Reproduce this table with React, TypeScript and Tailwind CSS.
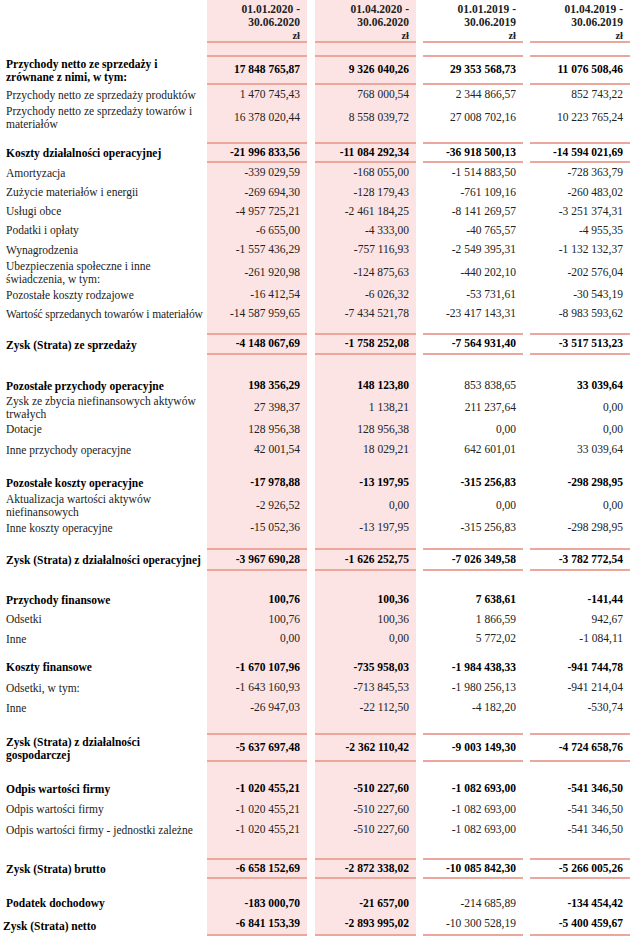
type Row = {
  label?: string[];
  values?: string[];
  bold?: boolean;
  h: string;
  line?: boolean;
  plain?: number[];
  header?: boolean;
  shift?: boolean;
  tight?: boolean;
};

const rows: Row[] = [
  { header: true, h: 'h-[43px]', line: true },
  { h: 'h-[14px]', line: true },
  {
    label: ['Przychody netto ze sprzedaży i', 'zrównane z nimi, w tym:'],
    values: ['17 848 765,87', '9 326 040,26', '29 353 568,73', '11 076 508,46'],
    bold: true,
    h: 'h-[28px]',
    line: true,
  },
  {
    label: ['Przychody netto ze sprzedaży produktów'],
    values: ['1 470 745,43', '768 000,54', '2 344 866,57', '852 743,22'],
    h: 'h-[20px]',
  },
  {
    label: ['Przychody netto ze sprzedaży towarów i', 'materiałów'],
    values: ['16 378 020,44', '8 558 039,72', '27 008 702,16', '10 223 765,24'],
    h: 'h-[25px]',
  },
  { h: 'h-[14px]', line: true },
  {
    label: ['Koszty działalności operacyjnej'],
    values: ['-21 996 833,56', '-11 084 292,34', '-36 918 500,13', '-14 594 021,69'],
    bold: true,
    h: 'h-[19px]',
    line: true,
  },
  { label: ['Amortyzacja'], values: ['-339 029,59', '-168 055,00', '-1 514 883,50', '-728 363,79'], h: 'h-[20px]' },
  { label: ['Zużycie materiałów i energii'], values: ['-269 694,30', '-128 179,43', '-761 109,16', '-260 483,02'], h: 'h-[19px]' },
  { label: ['Usługi obce'], values: ['-4 957 725,21', '-2 461 184,25', '-8 141 269,57', '-3 251 374,31'], h: 'h-[19px]' },
  { label: ['Podatki i opłaty'], values: ['-6 655,00', '-4 333,00', '-40 765,57', '-4 955,35'], h: 'h-[19px]' },
  { label: ['Wynagrodzenia'], values: ['-1 557 436,29', '-757 116,93', '-2 549 395,31', '-1 132 132,37'], h: 'h-[20px]' },
  {
    label: ['Ubezpieczenia społeczne i inne', 'świadczenia, w tym:'],
    values: ['-261 920,98', '-124 875,63', '-440 202,10', '-202 576,04'],
    h: 'h-[26px]',
  },
  { label: ['Pozostałe koszty rodzajowe'], values: ['-16 412,54', '-6 026,32', '-53 731,61', '-30 543,19'], h: 'h-[18px]' },
  {
    label: ['Wartość sprzedanych towarów i materiałów'],
    values: ['-14 587 959,65', '-7 434 521,78', '-23 417 143,31', '-8 983 593,62'],
    h: 'h-[20px]',
    tight: true,
  },
  { h: 'h-[11px]', line: true },
  {
    label: ['Zysk (Strata) ze sprzedaży'],
    values: ['-4 148 067,69', '-1 758 252,08', '-7 564 931,40', '-3 517 513,23'],
    bold: true,
    h: 'h-[20px]',
    line: true,
  },
  { h: 'h-[21px]' },
  {
    label: ['Pozostałe przychody operacyjne'],
    values: ['198 356,29', '148 123,80', '853 838,65', '33 039,64'],
    bold: true,
    plain: [2],
    h: 'h-[20px]',
  },
  {
    label: ['Zysk ze zbycia niefinansowych aktywów', 'trwałych'],
    values: ['27 398,37', '1 138,21', '211 237,64', '0,00'],
    h: 'h-[23px]',
  },
  { label: ['Dotacje'], values: ['128 956,38', '128 956,38', '0,00', '0,00'], h: 'h-[21px]' },
  { label: ['Inne przychody operacyjne'], values: ['42 001,54', '18 029,21', '642 601,01', '33 039,64'], h: 'h-[20px]' },
  { h: 'h-[13px]' },
  {
    label: ['Pozostałe koszty operacyjne'],
    values: ['-17 978,88', '-13 197,95', '-315 256,83', '-298 298,95'],
    bold: true,
    h: 'h-[20px]',
  },
  {
    label: ['Aktualizacja wartości aktywów', 'niefinansowych'],
    values: ['-2 926,52', '0,00', '0,00', '0,00'],
    h: 'h-[25px]',
  },
  { label: ['Inne koszty operacyjne'], values: ['-15 052,36', '-13 197,95', '-315 256,83', '-298 298,95'], h: 'h-[20px]' },
  { h: 'h-[12px]', line: true },
  {
    label: ['Zysk (Strata) z działalności operacyjnej'],
    values: ['-3 967 690,28', '-1 626 252,75', '-7 026 349,58', '-3 782 772,54'],
    bold: true,
    h: 'h-[21px]',
    line: true,
  },
  { h: 'h-[19px]' },
  {
    label: ['Przychody finansowe'],
    values: ['100,76', '100,36', '7 638,61', '-141,44'],
    bold: true,
    h: 'h-[20px]',
  },
  { label: ['Odsetki'], values: ['100,76', '100,36', '1 866,59', '942,67'], h: 'h-[19px]' },
  { label: ['Inne'], values: ['0,00', '0,00', '5 772,02', '-1 084,11'], h: 'h-[20px]' },
  { h: 'h-[8px]' },
  {
    label: ['Koszty finansowe'],
    values: ['-1 670 107,96', '-735 958,03', '-1 984 438,33', '-941 744,78'],
    bold: true,
    h: 'h-[21px]',
  },
  { label: ['Odsetki, w tym:'], values: ['-1 643 160,93', '-713 845,53', '-1 980 256,13', '-941 214,04'], h: 'h-[20px]' },
  { label: ['Inne'], values: ['-26 947,03', '-22 112,50', '-4 182,20', '-530,74'], h: 'h-[20px]' },
  { h: 'h-[17px]', line: true },
  {
    label: ['Zysk (Strata) z działalności', 'gospodarczej'],
    values: ['-5 637 697,48', '-2 362 110,42', '-9 003 149,30', '-4 724 658,76'],
    bold: true,
    h: 'h-[27px]',
    line: true,
  },
  { h: 'h-[17px]' },
  {
    label: ['Odpis wartości firmy'],
    values: ['-1 020 455,21', '-510 227,60', '-1 082 693,00', '-541 346,50'],
    bold: true,
    h: 'h-[20px]',
  },
  { label: ['Odpis wartości firmy'], values: ['-1 020 455,21', '-510 227,60', '-1 082 693,00', '-541 346,50'], h: 'h-[21px]' },
  {
    label: ['Odpis wartości firmy - jednostki zależne'],
    values: ['-1 020 455,21', '-510 227,60', '-1 082 693,00', '-541 346,50'],
    h: 'h-[20px]',
  },
  { h: 'h-[20px]', line: true },
  {
    label: ['Zysk (Strata) brutto'],
    values: ['-6 658 152,69', '-2 872 338,02', '-10 085 842,30', '-5 266 005,26'],
    bold: true,
    h: 'h-[19px]',
    line: true,
  },
  { h: 'h-[14px]' },
  {
    label: ['Podatek dochodowy'],
    values: ['-183 000,70', '-21 657,00', '-214 685,89', '-134 454,42'],
    bold: true,
    plain: [2],
    h: 'h-[21px]',
  },
  {
    label: ['Zysk (Strata) netto'],
    values: ['-6 841 153,39', '-2 893 995,02', '-10 300 528,19', '-5 400 459,67'],
    bold: true,
    plain: [2],
    h: 'h-[22px]',
    line: true,
    shift: true,
  },
];

const headers = [
  ['01.01.2020 -', '30.06.2020'],
  ['01.04.2020 -', '30.06.2020'],
  ['01.01.2019 -', '30.06.2019'],
  ['01.04.2019 -', '30.06.2019'],
];

// data columns: first two shaded, spacing between columns as in the report
const colClass = [
  'w-[100px] bg-[#fbe4e3]',
  'ml-[8px] w-[101px] bg-[#fbe4e3]',
  'ml-[7px] w-[100px]',
  'ml-[7px] w-[100px]',
];

function TableRow({ row }: { row: Row }) {
  const line = row.line ? 'border-b-2 border-[#eba79b]' : '';
  return (
    <div className={`flex ${row.h}`}>
      <div
        className={`w-[207px] flex flex-col justify-center leading-[13px] ${row.shift ? 'pl-[3px] pt-[3px]' : 'pl-[6px]'} ${
          row.bold ? 'font-bold text-black' : 'text-[#222]'
        } ${row.tight ? 'tracking-[-0.12px]' : ''}`}
      >
        {row.label?.map((l, i) => (
          <span key={i} className="whitespace-nowrap">
            {l}
          </span>
        ))}
      </div>
      {colClass.map((c, i) => (
        <div
          key={i}
          className={`${c} ${line} flex ${row.header ? 'flex-col items-end justify-start pt-[3px]' : 'items-center justify-end'} pr-[7px]`}
        >
          {row.header ? (
            <>
              <span className="font-bold leading-[13px]">{headers[i][0]}</span>
              <span className="font-bold leading-[13px]">{headers[i][1]}</span>
              <span className="font-bold leading-[13px] text-[10.5px]">zł</span>
            </>
          ) : (
            row.values && (
              <span
                className={`whitespace-nowrap ${
                  row.bold && !row.plain?.includes(i) ? 'font-bold text-black' : 'text-[#222]'
                }`}
              >
                {row.values[i]}
              </span>
            )
          )}
        </div>
      ))}
    </div>
  );
}

export default function App() {
  return (
    <div className="w-[631px] h-[937px] bg-white overflow-hidden font-['Liberation_Serif',serif] text-[11.5px] text-[#222]">
      {rows.map((r, i) => (
        <TableRow key={i} row={r} />
      ))}
    </div>
  );
}
